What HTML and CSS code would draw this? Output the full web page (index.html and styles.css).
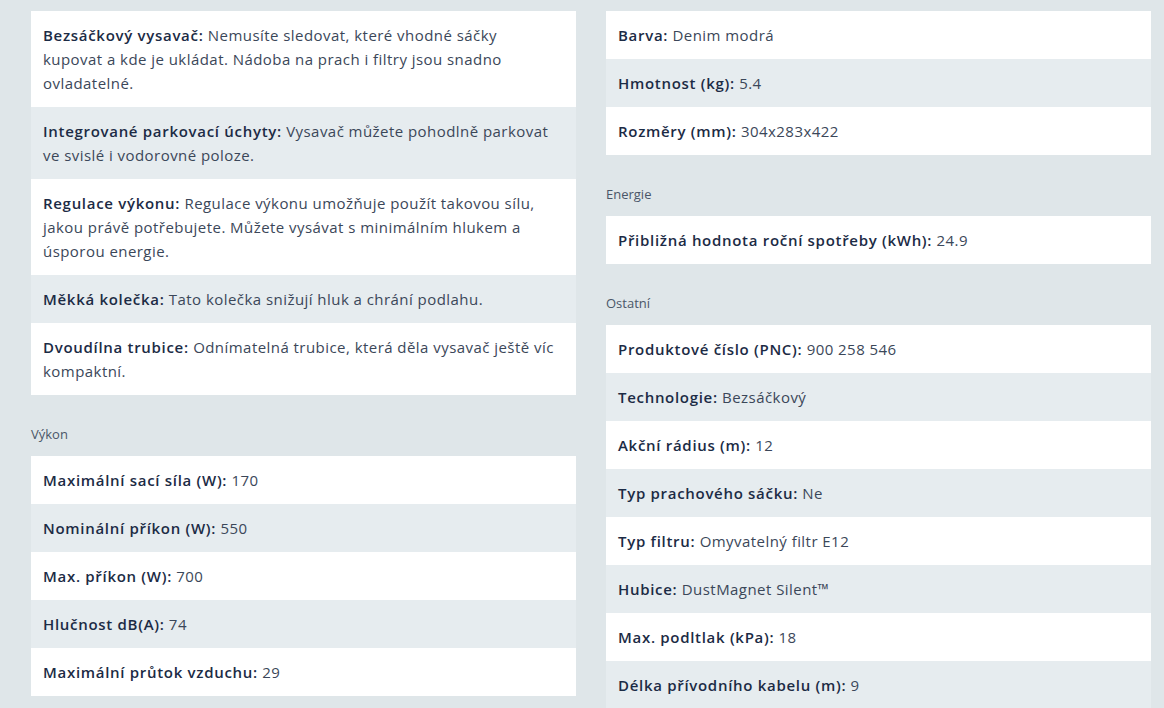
FILE: index.html
```html
<!DOCTYPE html>
<html lang="cs">
<head>
<meta charset="utf-8">
<link rel="stylesheet" href="styles.css">
</head>
<body>
<div class="page">
  <div class="col">
    <div class="card">
      <div class="row"><b>Bezsáčkový vysavač:</b> Nemusíte sledovat, které vhodné sáčky kupovat a kde je ukládat. Nádoba na prach i filtry jsou snadno ovladatelné.</div>
      <div class="row"><b>Integrované parkovací úchyty:</b> Vysavač můžete pohodlně parkovat ve svislé i vodorovné poloze.</div>
      <div class="row"><b>Regulace výkonu:</b> Regulace výkonu umožňuje použít takovou sílu, jakou právě potřebujete. Můžete vysávat s minimálním hlukem a úsporou energie.</div>
      <div class="row"><b>Měkká kolečka:</b> Tato kolečka snižují hluk a chrání podlahu.</div>
      <div class="row"><b>Dvoudílna trubice:</b> Odnímatelná trubice, která děla vysavač ještě víc kompaktní.</div>
    </div>
    <div class="heading">Výkon</div>
    <div class="card">
      <div class="row"><b>Maximální sací síla (W):</b> 170</div>
      <div class="row"><b>Nominální příkon (W):</b> 550</div>
      <div class="row"><b>Max. příkon (W):</b> 700</div>
      <div class="row"><b>Hlučnost dB(A):</b> 74</div>
      <div class="row"><b>Maximální průtok vzduchu:</b> 29</div>
    </div>
  </div>
  <div class="col">
    <div class="card">
      <div class="row"><b>Barva:</b> Denim modrá</div>
      <div class="row"><b>Hmotnost (kg):</b> 5.4</div>
      <div class="row"><b>Rozměry (mm):</b> 304x283x422</div>
    </div>
    <div class="heading">Energie</div>
    <div class="card">
      <div class="row"><b>Přibližná hodnota roční spotřeby (kWh):</b> 24.9</div>
    </div>
    <div class="heading">Ostatní</div>
    <div class="card">
      <div class="row"><b>Produktové číslo (PNC):</b> 900 258 546</div>
      <div class="row"><b>Technologie:</b> Bezsáčkový</div>
      <div class="row"><b>Akční rádius (m):</b> 12</div>
      <div class="row"><b>Typ prachového sáčku:</b> Ne</div>
      <div class="row"><b>Typ filtru:</b> Omyvatelný filtr E12</div>
      <div class="row"><b>Hubice:</b> DustMagnet Silent™</div>
      <div class="row"><b>Max. podltlak (kPa):</b> 18</div>
      <div class="row"><b>Délka přívodního kabelu (m):</b> 9</div>
    </div>
  </div>
</div>
</body>
</html>
```

FILE: styles.css
```css
html, body {
  margin: 0;
  padding: 0;
  background: #dfe6e9;
}
body {
  font-family: "Open Sans", "Noto Sans", sans-serif;
  color: #3b4759;
  font-size: 15px;
  overflow: hidden;
  height: 708px;
}
.page {
  display: flex;
  gap: 30px;
  padding: 11px 13px 0 31px;
}
.col {
  width: 545px;
  flex: none;
}
.card {
  display: flex;
  flex-direction: column;
}
.row {
  background: #ffffff;
  padding: 12px 16px 12px 12px;
  line-height: 24px;
  letter-spacing: 0.45px;
}
.row:nth-child(even) {
  background: #e6ecef;
}
.row b {
  color: #1c2b45;
  font-weight: 600;
  letter-spacing: 0.7px;
}
.heading {
  font-size: 13px;
  line-height: 18px;
  color: #4a5668;
  margin: 30px 0 13px;
}
```
